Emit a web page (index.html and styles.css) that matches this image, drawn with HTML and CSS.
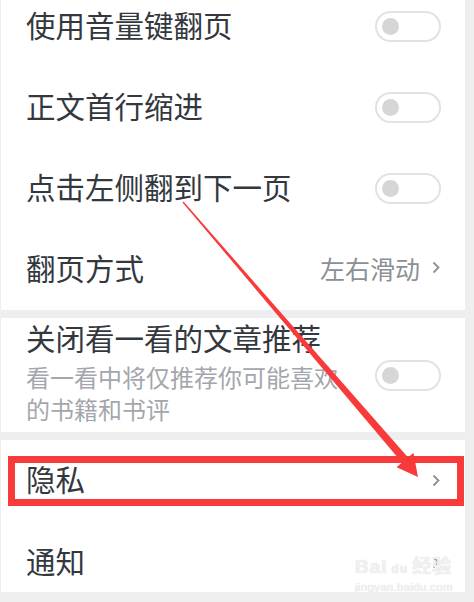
FILE: index.html
```html
<!DOCTYPE html>
<html lang="zh-CN">
<head>
    <meta charset="UTF-8">
    <meta name="viewport" content="width=device-width, initial-scale=1.0">
    <title>阅读设置</title>
    <link rel="stylesheet" href="styles.css">
</head>
<body>

    <div class="screen">
        <section class="group group-first">
            <div class="row">
                <span class="label">使用音量键翻页</span>
                <span class="switch"><span class="knob"></span></span>
            </div>
            <div class="row">
                <span class="label">正文首行缩进</span>
                <span class="switch"><span class="knob"></span></span>
            </div>
            <div class="row">
                <span class="label">点击左侧翻到下一页</span>
                <span class="switch"><span class="knob"></span></span>
            </div>
            <div class="row">
                <span class="label">翻页方式</span>
                <span class="value">左右滑动
                    <svg class="chevron" width="8" height="13" viewBox="0 0 8 13"><polyline points="1.5,1.5 6.5,6.5 1.5,11.5" /></svg>
                </span>
            </div>
        </section>

        <section class="group">
            <div class="row row-desc">
                <div class="desc-text">
                    <div class="title">关闭看一看的文章推荐</div>
                    <div class="desc">看一看中将仅推荐你可能喜欢的书籍和书评</div>
                </div>
                <span class="switch"><span class="knob"></span></span>
            </div>
        </section>

        <section class="group">
            <div class="row row-marked">
                <span class="label">隐私</span>
                <svg class="chevron" width="8" height="13" viewBox="0 0 8 13"><polyline points="1.5,1.5 6.5,6.5 1.5,11.5" /></svg>
                <div class="mark-box"></div>
            </div>
            <div class="row row-last">
                <span class="label">通知</span>
                <svg class="chevron" width="8" height="13" viewBox="0 0 8 13"><polyline points="1.5,1.5 6.5,6.5 1.5,11.5" /></svg>
            </div>
        </section>

        <div class="watermark">
            <div class="wm-brand">Bai<span class="wm-paw">du</span>经验</div>
            <div class="wm-url">jingyan.baidu.com</div>
        </div>
    </div>

    <svg class="arrow" width="474" height="602" viewBox="0 0 474 602">
        <polygon points="182.5,202.4 401.9,462.6 396.6,467.2 418,477 413.4,452.8 408.1,457.4 183.5,201.6" />
    </svg>

</body>
</html>
```

FILE: styles.css
```css
body {
    margin: 0;
    background: #efefef;
    font-family: "Noto Sans CJK SC", "Noto Sans", sans-serif;
    position: relative;
    width: 474px;
    height: 602px;
    overflow: hidden;
}

.screen {
    position: relative;
    width: 464px;
    height: 592px;
    margin-left: 1px;
    background: #eceef0;
    display: flex;
    flex-direction: column;
    gap: 8px;
    overflow: hidden;
}

.group {
    background: #fff;
}

.group-first {
    margin-top: -14px;
}

.row {
    position: relative;
    height: 81px;
    box-sizing: border-box;
    padding: 0 24px;
    display: flex;
    align-items: center;
    justify-content: space-between;
}

.label,
.title {
    font-size: 29.5px;
    color: #33383e;
    line-height: 36px;
    padding-left: 1px;
}

.label {
    padding-bottom: 6px;
}

.value {
    display: flex;
    align-items: center;
    gap: 12px;
    font-size: 25px;
    color: #8b9096;
    padding-bottom: 4px;
}

.chevron {
    fill: none;
    stroke: #8b9096;
    stroke-width: 1.8;
    margin-right: 1px;
}

.switch {
    width: 66px;
    height: 31px;
    box-sizing: border-box;
    border: 2px solid #e2e2e2;
    border-radius: 16px;
    display: flex;
    align-items: center;
    padding-left: 5px;
}

.knob {
    width: 17px;
    height: 17px;
    border-radius: 50%;
    background: #d6d6d6;
}

.row-desc {
    height: 114px;
}

.desc-text {
    padding-bottom: 6px;
}

.desc {
    margin-top: 6px;
    width: 320px;
    font-size: 24px;
    line-height: 32px;
    color: #a3a7ac;
    padding-left: 1px;
}

.row-last {
    height: 71px;
    padding-top: 12px;
}

.mark-box {
    position: absolute;
    left: 7px;
    top: 16px;
    width: 456px;
    height: 50px;
    box-sizing: border-box;
    border: 7px solid #f93a3a;
}

.arrow {
    position: absolute;
    left: 0;
    top: 0;
    fill: #f93a3a;
}

.watermark {
    position: absolute;
    left: 354px;
    top: 556px;
    color: #f1f1f1;
    font-family: "Liberation Sans", "Noto Sans CJK SC", sans-serif;
    text-shadow: 0 0 1px #d4d4d4;
}

.wm-brand {
    font-size: 19px;
    font-weight: bold;
    line-height: 22px;
    letter-spacing: 1px;
}

.wm-paw {
    font-size: 12px;
    margin: 0 4px;
}

.wm-url {
    font-size: 11.5px;
    line-height: 14px;
    letter-spacing: 0.3px;
}
```
